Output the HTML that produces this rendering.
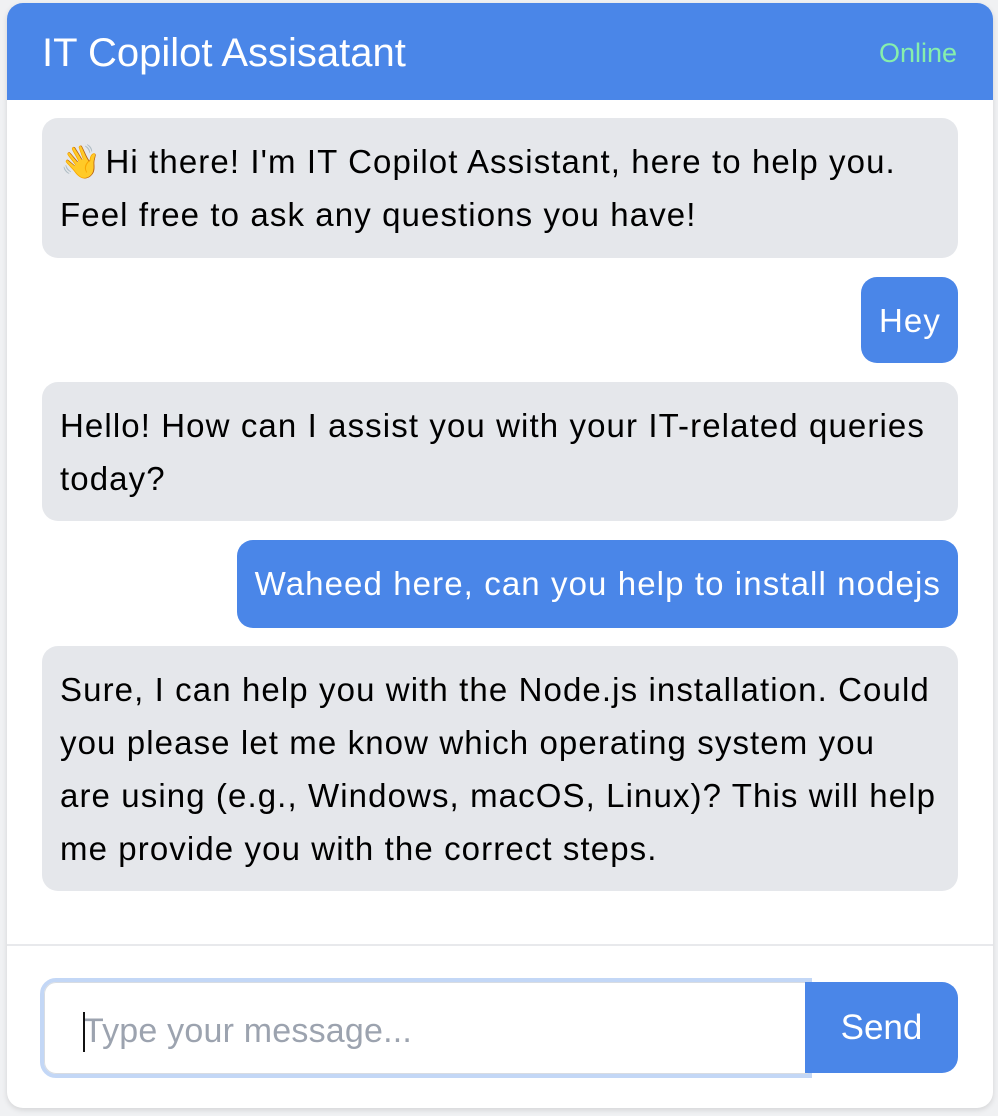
<!DOCTYPE html>
<html><head><meta charset="utf-8"><style>
*{box-sizing:border-box;margin:0;padding:0}
body{width:998px;height:1116px;background:#f0f1f3;font-family:"Liberation Sans",Arial,sans-serif;position:relative;overflow:hidden}
.card{position:absolute;left:7px;top:3px;width:986px;height:1105px;background:#fff;border-radius:16px;overflow:hidden;box-shadow:0 2px 6px rgba(0,0,0,.12)}
.hdr{position:absolute;left:0;top:0;width:100%;height:97px;background:#4a86e8}
.title{position:absolute;left:35px;top:27px;color:#fff;font-size:40px;line-height:46px}
.online{position:absolute;right:36px;top:34px;color:#86efac;font-size:27px;line-height:32px}
.b{position:absolute;font-size:33px;letter-spacing:1.1px;line-height:53px;border-radius:16px;padding:17px 18px 16px;white-space:nowrap;color:#000}
.bot{background:#e5e7eb;left:35px;width:916px}
.me{background:#4a86e8;color:#fff;right:35px;padding-left:18px;padding-right:17px}
.sep{position:absolute;left:0;top:941px;width:100%;height:2px;background:#e8e9ec}
.inp{position:absolute;left:33px;top:975px;width:772px;height:100px;border:4px solid #c3d7f6;border-radius:16px 0 0 16px;background:#fff}
.inp .in{position:absolute;left:0;top:0;right:0;bottom:0;border:1px solid #d8dce2;border-radius:12px 0 0 12px}
.ph{position:absolute;left:39px;top:29px;font-size:34px;line-height:40px;color:#9ca3af;letter-spacing:.2px}
.caret{position:absolute;left:39px;top:30px;width:2px;height:40px;background:#111}
.send{position:absolute;left:798px;top:979px;width:153px;height:91px;background:#4a86e8;border-radius:0 16px 16px 0;color:#fff;font-size:35px;line-height:91px;text-align:center}
.em{margin-right:-7px}
</style></head><body>
<div class="card">
<div class="hdr"><div class="title">IT Copilot Assisatant</div><div class="online">Online</div></div>
<div class="b bot" style="top:115px;height:140px"><span class="em">👋</span> Hi there! I'm IT Copilot Assistant, here to help you.<br>Feel free to ask any questions you have!</div>
<div class="b me" style="top:274px;height:86px">Hey</div>
<div class="b bot" style="top:379px;height:139px">Hello! How can I assist you with your IT-related queries<br>today?</div>
<div class="b me" style="top:537px;height:88px">Waheed here, can you help to install nodejs</div>
<div class="b bot" style="top:643px;height:245px">Sure, I can help you with the Node.js installation. Could<br>you please let me know which operating system you<br>are using (e.g., Windows, macOS, Linux)? This will help<br>me provide you with the correct steps.</div>
<div class="sep"></div>
<div class="inp"><div class="in"></div><div class="ph">Type your message...</div><div class="caret"></div></div>
<div class="send">Send</div>
</div>
</body></html>
